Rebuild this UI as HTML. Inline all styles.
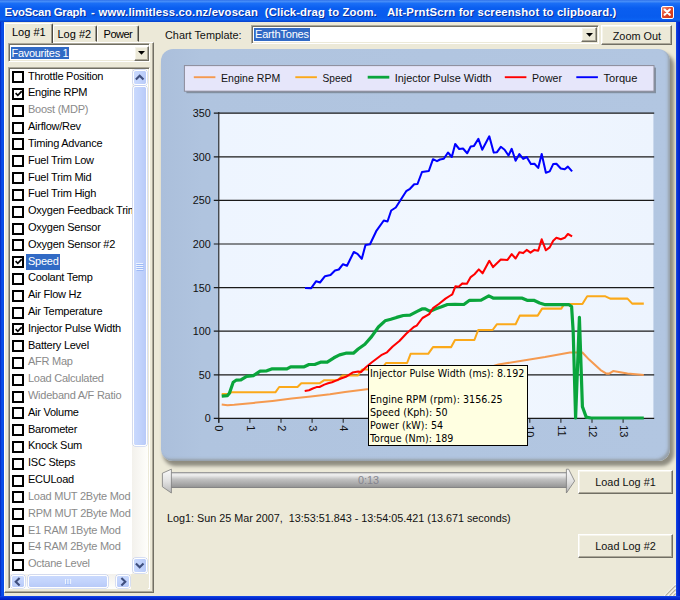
<!DOCTYPE html>
<html><head><meta charset="utf-8"><title>EvoScan Graph</title>
<style>
html,body{margin:0;padding:0;}
body{width:680px;height:600px;overflow:hidden;background:#ECE9D8;position:relative;font-family:"Liberation Sans",sans-serif;font-size:11px;color:#000;}
.a{position:absolute;}
.t{position:absolute;white-space:pre;line-height:13px;}
#title{left:0;top:0;width:680px;height:22px;background:linear-gradient(#2A6CE8 0px,#4A90F8 1.2px,#1A6EF6 3.5px,#0A5EF0 8px,#085CEE 17px,#0B62F2 19.5px,#0A4AD6 21.2px,#0840C8 22px);}
#title .t{top:4.9px;color:#fff;font-weight:bold;font-size:11.3px;line-height:15px;text-shadow:1px 1px 0 #0A2F9C;}
.bl{background:#0542D6;}
.btn{position:absolute;background:#ECE9D8;box-sizing:border-box;border:1px solid;border-color:#fff #716F64 #716F64 #fff;box-shadow:inset -1px -1px 0 #ACA899, inset 1px 1px 0 #F6F4EA;text-align:center;}
.sunk{position:absolute;box-sizing:border-box;border:1px solid;border-color:#ACA899 #fff #fff #ACA899;box-shadow:inset 1px 1px 0 #716F64, inset -1px -1px 0 #ECE9D8;background:#fff;}
.cb{position:absolute;left:12.5px;width:12px;height:12px;box-sizing:border-box;border:2px solid #000;background:#fff;}
.it{position:absolute;left:28px;white-space:pre;line-height:13px;letter-spacing:-0.25px;}
.g{color:#8A8A8A;}
.lb{font-size:11.7px;transform:scaleX(0.93);transform-origin:0 0;color:#111;}
.lb.c{left:0;width:100%;transform-origin:50% 0;}
.sb{position:absolute;box-sizing:border-box;border:1px solid #fff;border-radius:2.5px;background:linear-gradient(90deg,#C9D9FD,#C2D3FC 50%,#B8CAF8);box-shadow:0 0 0 0.5px #B4C4F0;}
</style></head><body>

<div id="title" class="a"><div class="t" style="left:4.6px;letter-spacing:-0.21px">EvoScan Graph </div><div class="t" style="left:90.9px">- </div><div class="t" style="left:98.6px;letter-spacing:0.18px">www.limitless.co.nz/evoscan  </div><div class="t" style="left:264.8px;letter-spacing:0.11px">(Click-drag to Zoom.   </div><div class="t" style="left:386.9px;letter-spacing:0.16px">Alt-PrntScrn for screenshot to clipboard.)</div></div>
<div class="a" style="left:0;top:22px;width:3.9px;height:578px;background:linear-gradient(90deg,#0424B8,#0A50EE 45%,#0848E2)"></div>
<div class="a" style="left:676px;top:22px;width:4px;height:578px;background:linear-gradient(90deg,#1648EA,#0530D6 40%,#001EC2)"></div>
<div class="a" style="left:0;top:595.6px;width:680px;height:4.4px;background:linear-gradient(#1648EA,#0530D6 40%,#001EC2)"></div>
<div class="a" style="left:661.4px;top:6.3px;width:12.4px;height:12.4px;box-sizing:border-box;border:1px solid #fff;border-radius:2px;background:linear-gradient(135deg,#F0967C,#E2482A 45%,#C9341A)"><svg class="a" style="left:0;top:0" width="10.4" height="10.4" viewBox="0 0 10.4 10.4"><path d="M2.6 2.6 L7.8 7.8 M7.8 2.6 L2.6 7.8" stroke="#fff" stroke-width="2.2" stroke-linecap="round"/></svg></div>
<div class="a" style="left:4.2px;top:41.6px;width:149.6px;height:551.6px;box-sizing:border-box;border:1px solid;border-color:#fff #716F64 #716F64 #fff;box-shadow:inset -1px -1px 0 #ACA899"></div>
<div class="a" style="left:53px;top:25px;width:43.5px;height:17px;box-sizing:border-box;border:1px solid;border-color:#fff #4A4840 transparent #fff;border-radius:2px 2px 0 0;box-shadow:inset -1px 0 0 #9D9A8C"></div>
<div class="a" style="left:96.5px;top:25px;width:42px;height:17px;box-sizing:border-box;border:1px solid;border-color:#fff #4A4840 transparent #fff;border-radius:2px 2px 0 0;box-shadow:inset -1px 0 0 #9D9A8C"></div>
<div class="a" style="left:4.2px;top:23px;width:49px;height:19.6px;box-sizing:border-box;border:1px solid;border-color:#fff #4A4840 #ECE9D8 #fff;border-bottom:none;border-radius:2px 2px 0 0;background:#ECE9D8;box-shadow:inset -1px 0 0 #9D9A8C"></div>
<div class="t" style="left:12px;top:25.5px;font-size:11px">Log #1</div>
<div class="t" style="left:57.5px;top:27.5px;font-size:11px">Log #2</div>
<div class="t" style="left:103.6px;top:27.5px;font-size:11px;letter-spacing:-0.5px">Power</div>
<div class="sunk" style="left:8.3px;top:43.4px;width:142px;height:19px"></div>
<div class="a" style="left:11px;top:47px;width:57.5px;height:12.4px;background:#316AC5"></div>
<div class="t" style="left:11.5px;top:46.8px;color:#fff;letter-spacing:-0.3px">Favourites 1</div>
<div class="btn" style="left:134px;top:45.6px;width:14.6px;height:15.2px"><svg class="a" style="left:3.3px;top:4.6px" width="7" height="4" viewBox="0 0 7 4"><path d="M0 0 H7 L3.5 3.8 Z" fill="#000"/></svg></div>
<div class="sunk" style="left:8.3px;top:67.4px;width:142px;height:522px"></div>
<div class="a" style="left:10.3px;top:69.4px;width:122.2px;height:505px;overflow:hidden;background:#fff">
<div class="cb" style="left:2.2px;top:1.85px">
</div>
<div class="it" style="left:17.7px;top:0.25px">Throttle Position</div>
<div class="cb" style="left:2.2px;top:18.66px">
<svg class="a" style="left:0.3px;top:0.3px" width="7.4" height="7.4" viewBox="0 0 7.4 7.4"><path d="M0.6 3.2 L2.8 5.4 L6.8 1.2" stroke="#000" stroke-width="1.7" fill="none"/></svg>
</div>
<div class="it" style="left:17.7px;top:17.06px">Engine RPM</div>
<div class="cb" style="left:2.2px;top:35.47px">
</div>
<div class="it g" style="left:17.7px;top:33.87px">Boost (MDP)</div>
<div class="cb" style="left:2.2px;top:52.28px">
</div>
<div class="it" style="left:17.7px;top:50.68px">Airflow/Rev</div>
<div class="cb" style="left:2.2px;top:69.09px">
</div>
<div class="it" style="left:17.7px;top:67.49px">Timing Advance</div>
<div class="cb" style="left:2.2px;top:85.90px">
</div>
<div class="it" style="left:17.7px;top:84.30px">Fuel Trim Low</div>
<div class="cb" style="left:2.2px;top:102.71px">
</div>
<div class="it" style="left:17.7px;top:101.11px">Fuel Trim Mid</div>
<div class="cb" style="left:2.2px;top:119.52px">
</div>
<div class="it" style="left:17.7px;top:117.92px">Fuel Trim High</div>
<div class="cb" style="left:2.2px;top:136.33px">
</div>
<div class="it" style="left:17.7px;top:134.73px">Oxygen Feedback Trim</div>
<div class="cb" style="left:2.2px;top:153.14px">
</div>
<div class="it" style="left:17.7px;top:151.54px">Oxygen Sensor</div>
<div class="cb" style="left:2.2px;top:169.95px">
</div>
<div class="it" style="left:17.7px;top:168.35px">Oxygen Sensor #2</div>
<div class="a" style="left:16px;top:184.96px;width:33.6px;height:16px;background:#316AC5"></div>
<div class="cb" style="left:2.2px;top:186.76px">
<svg class="a" style="left:0.3px;top:0.3px" width="7.4" height="7.4" viewBox="0 0 7.4 7.4"><path d="M0.6 3.2 L2.8 5.4 L6.8 1.2" stroke="#000" stroke-width="1.7" fill="none"/></svg>
</div>
<div class="it" style="left:17.7px;top:185.16px;color:#fff">Speed</div>
<div class="cb" style="left:2.2px;top:203.57px">
</div>
<div class="it" style="left:17.7px;top:201.97px">Coolant Temp</div>
<div class="cb" style="left:2.2px;top:220.38px">
</div>
<div class="it" style="left:17.7px;top:218.78px">Air Flow Hz</div>
<div class="cb" style="left:2.2px;top:237.19px">
</div>
<div class="it" style="left:17.7px;top:235.59px">Air Temperature</div>
<div class="cb" style="left:2.2px;top:254.00px">
<svg class="a" style="left:0.3px;top:0.3px" width="7.4" height="7.4" viewBox="0 0 7.4 7.4"><path d="M0.6 3.2 L2.8 5.4 L6.8 1.2" stroke="#000" stroke-width="1.7" fill="none"/></svg>
</div>
<div class="it" style="left:17.7px;top:252.40px">Injector Pulse Width</div>
<div class="cb" style="left:2.2px;top:270.81px">
</div>
<div class="it" style="left:17.7px;top:269.21px">Battery Level</div>
<div class="cb" style="left:2.2px;top:287.62px">
</div>
<div class="it g" style="left:17.7px;top:286.02px">AFR Map</div>
<div class="cb" style="left:2.2px;top:304.43px">
</div>
<div class="it g" style="left:17.7px;top:302.83px">Load Calculated</div>
<div class="cb" style="left:2.2px;top:321.24px">
</div>
<div class="it g" style="left:17.7px;top:319.64px">Wideband A/F Ratio</div>
<div class="cb" style="left:2.2px;top:338.05px">
</div>
<div class="it" style="left:17.7px;top:336.45px">Air Volume</div>
<div class="cb" style="left:2.2px;top:354.86px">
</div>
<div class="it" style="left:17.7px;top:353.26px">Barometer</div>
<div class="cb" style="left:2.2px;top:371.67px">
</div>
<div class="it" style="left:17.7px;top:370.07px">Knock Sum</div>
<div class="cb" style="left:2.2px;top:388.48px">
</div>
<div class="it" style="left:17.7px;top:386.88px">ISC Steps</div>
<div class="cb" style="left:2.2px;top:405.29px">
</div>
<div class="it" style="left:17.7px;top:403.69px">ECULoad</div>
<div class="cb" style="left:2.2px;top:422.10px">
</div>
<div class="it g" style="left:17.7px;top:420.50px">Load MUT 2Byte Mod</div>
<div class="cb" style="left:2.2px;top:438.91px">
</div>
<div class="it g" style="left:17.7px;top:437.31px">RPM MUT 2Byte Mod</div>
<div class="cb" style="left:2.2px;top:455.72px">
</div>
<div class="it g" style="left:17.7px;top:454.12px">E1 RAM 1Byte Mod</div>
<div class="cb" style="left:2.2px;top:472.53px">
</div>
<div class="it g" style="left:17.7px;top:470.93px">E4 RAM 2Byte Mod</div>
<div class="cb" style="left:2.2px;top:489.34px">
</div>
<div class="it g" style="left:17.7px;top:487.74px">Octane Level</div>
</div>
<div class="a" style="left:131.5px;top:69.4px;width:16.5px;height:505px;background:linear-gradient(90deg,#F3F1EC,#FEFEFB)"></div>
<div class="sb" style="left:132.6px;top:70.2px;width:14.2px;height:14.6px"><svg class="a" style="left:1.7px;top:3px" width="9.4" height="7" viewBox="0 0 9.4 7"><path d="M0.9 5.6 L4.7 1.7 L8.5 5.6" stroke="#3F4F7E" stroke-width="2.1" fill="none"/></svg></div>
<div class="sb" style="left:132.6px;top:557.8px;width:14.2px;height:14.8px"><svg class="a" style="left:1.7px;top:3.6px" width="9.4" height="7" viewBox="0 0 9.4 7"><path d="M0.9 1.4 L4.7 5.3 L8.5 1.4" stroke="#3F4F7E" stroke-width="2.1" fill="none"/></svg></div>
<div class="sb" style="left:132.6px;top:86.4px;width:14.2px;height:359.4px"><div class="a" style="left:2.8px;top:175.4px;width:6.6px;height:1px;background:#EEF4FE;box-shadow:0 2px 0 #EEF4FE,0 4px 0 #EEF4FE,0 6px 0 #EEF4FE,0.6px 1px 0 #9DB9F6,0.6px 3px 0 #9DB9F6,0.6px 5px 0 #9DB9F6,0.6px 7px 0 #9DB9F6"></div></div>
<div class="a" style="left:10.3px;top:574.2px;width:137.7px;height:14.6px;background:linear-gradient(#F3F1EC,#FEFEFB)"></div>
<div class="a" style="left:131px;top:574.2px;width:17px;height:14.6px;background:#ECE9D8"></div>
<div class="sb" style="left:10.8px;top:574.8px;width:14.6px;height:13.6px;background:linear-gradient(#C9D9FD,#C2D3FC 50%,#B8CAF8)"><svg class="a" style="left:2.6px;top:1.2px" width="7" height="9.4" viewBox="0 0 7 9.4"><path d="M5.6 0.9 L1.7 4.7 L5.6 8.5" stroke="#3F4F7E" stroke-width="2.1" fill="none"/></svg></div>
<div class="sb" style="left:115.6px;top:574.8px;width:14.6px;height:13.6px;background:linear-gradient(#C9D9FD,#C2D3FC 50%,#B8CAF8)"><svg class="a" style="left:3.6px;top:1.2px" width="7" height="9.4" viewBox="0 0 7 9.4"><path d="M1.4 0.9 L5.3 4.7 L1.4 8.5" stroke="#3F4F7E" stroke-width="2.1" fill="none"/></svg></div>
<div class="sb" style="left:28px;top:574.8px;width:80px;height:13.6px;background:linear-gradient(#C9D9FD,#C2D3FC 50%,#B8CAF8)"><div class="a" style="left:35.5px;top:3px;width:0.9px;height:5.5px;background:#EEF4FE;box-shadow:1.7px 0 0 #EEF4FE,3.4px 0 0 #EEF4FE,5.1px 0 0 #EEF4FE,0.8px 0.6px 0 #8CB0F8,2.5px 0.6px 0 #8CB0F8,4.2px 0.6px 0 #8CB0F8"></div></div>
<div class="t lb" style="left:164.8px;top:28.3px">Chart Template:</div>
<div class="sunk" style="left:250.6px;top:24.8px;width:348px;height:19.4px"></div>
<div class="a" style="left:254.4px;top:27.6px;width:55.2px;height:13.4px;background:#316AC5"></div>
<div class="t" style="left:255px;top:27.8px;color:#fff;letter-spacing:-0.18px">EarthTones</div>
<div class="btn" style="left:581px;top:26.6px;width:16px;height:15.8px"><svg class="a" style="left:3.7px;top:5.4px" width="7" height="4" viewBox="0 0 7 4"><path d="M0 0 H7 L3.5 3.8 Z" fill="#000"/></svg></div>
<div class="btn" style="left:600.6px;top:25px;width:71.8px;height:19.8px"><div class="t lb c" style="top:2.6px">Zoom Out</div></div>
<div class="a" style="left:160.6px;top:49.4px;width:509.8px;height:411.4px;border-radius:12px;background:linear-gradient(90deg,#ABBFDB,#B0C4DF 8%,#B2C6E1);box-shadow:3.2px 4.4px 3.8px 0.4px #8E8C80, inset -2.5px -2.5px 2.5px -0.5px rgba(125,125,118,0.5)"></div>
<svg class="a" style="left:0;top:0" width="680" height="600" viewBox="0 0 680 600" font-family="Liberation Sans, sans-serif" font-size="11">
<defs><linearGradient id="pg" x1="0" y1="0" x2="1" y2="0"><stop offset="0" stop-color="#EEF5FF"/><stop offset="0.5" stop-color="#F1F7FF"/><stop offset="1" stop-color="#EDF4FE"/></linearGradient></defs>
<rect x="186.4" y="67.6" width="469.6" height="25.6" fill="#7A8694" opacity="0.85"/>
<rect x="184.4" y="65.6" width="469.6" height="25.6" fill="#E6E6FA" stroke="#8B8B99" stroke-width="1"/>
<rect x="218.8" y="113.2" width="434.6" height="305.2" fill="url(#pg)"/>
<line x1="213.8" y1="418.40" x2="654.2" y2="418.40" stroke="#1A1A1A" stroke-width="1.2"/>
<text x="210.8" y="422.30" font-size="10.8" text-anchor="end" fill="#111">0</text>
<line x1="213.8" y1="374.80" x2="654.2" y2="374.80" stroke="#1A1A1A" stroke-width="1.2"/>
<text x="210.8" y="378.70" font-size="10.8" text-anchor="end" fill="#111">50</text>
<line x1="213.8" y1="331.20" x2="654.2" y2="331.20" stroke="#1A1A1A" stroke-width="1.2"/>
<text x="210.8" y="335.10" font-size="10.8" text-anchor="end" fill="#111">100</text>
<line x1="213.8" y1="287.60" x2="654.2" y2="287.60" stroke="#1A1A1A" stroke-width="1.2"/>
<text x="210.8" y="291.50" font-size="10.8" text-anchor="end" fill="#111">150</text>
<line x1="213.8" y1="244.00" x2="654.2" y2="244.00" stroke="#1A1A1A" stroke-width="1.2"/>
<text x="210.8" y="247.90" font-size="10.8" text-anchor="end" fill="#111">200</text>
<line x1="213.8" y1="200.40" x2="654.2" y2="200.40" stroke="#1A1A1A" stroke-width="1.2"/>
<text x="210.8" y="204.30" font-size="10.8" text-anchor="end" fill="#111">250</text>
<line x1="213.8" y1="156.80" x2="654.2" y2="156.80" stroke="#1A1A1A" stroke-width="1.2"/>
<text x="210.8" y="160.70" font-size="10.8" text-anchor="end" fill="#111">300</text>
<line x1="213.8" y1="113.20" x2="654.2" y2="113.20" stroke="#1A1A1A" stroke-width="1.2"/>
<text x="210.8" y="117.10" font-size="10.8" text-anchor="end" fill="#111">350</text>
<line x1="218.8" y1="112" x2="218.8" y2="422.8" stroke="#1E1E1E" stroke-width="1.1"/>
<line x1="218.80" y1="418.4" x2="218.80" y2="422.8" stroke="#1E1E1E" stroke-width="1"/>
<text transform="translate(215.40,425.2) rotate(90)" fill="#111">0</text>
<line x1="249.90" y1="418.4" x2="249.90" y2="422.8" stroke="#1E1E1E" stroke-width="1"/>
<text transform="translate(246.50,425.2) rotate(90)" fill="#111">1</text>
<line x1="281.00" y1="418.4" x2="281.00" y2="422.8" stroke="#1E1E1E" stroke-width="1"/>
<text transform="translate(277.60,425.2) rotate(90)" fill="#111">2</text>
<line x1="312.10" y1="418.4" x2="312.10" y2="422.8" stroke="#1E1E1E" stroke-width="1"/>
<text transform="translate(308.70,425.2) rotate(90)" fill="#111">3</text>
<line x1="343.20" y1="418.4" x2="343.20" y2="422.8" stroke="#1E1E1E" stroke-width="1"/>
<text transform="translate(339.80,425.2) rotate(90)" fill="#111">4</text>
<line x1="374.30" y1="418.4" x2="374.30" y2="422.8" stroke="#1E1E1E" stroke-width="1"/>
<text transform="translate(370.90,425.2) rotate(90)" fill="#111">5</text>
<line x1="405.40" y1="418.4" x2="405.40" y2="422.8" stroke="#1E1E1E" stroke-width="1"/>
<text transform="translate(402.00,425.2) rotate(90)" fill="#111">6</text>
<line x1="436.50" y1="418.4" x2="436.50" y2="422.8" stroke="#1E1E1E" stroke-width="1"/>
<text transform="translate(433.10,425.2) rotate(90)" fill="#111">7</text>
<line x1="467.60" y1="418.4" x2="467.60" y2="422.8" stroke="#1E1E1E" stroke-width="1"/>
<text transform="translate(464.20,425.2) rotate(90)" fill="#111">8</text>
<line x1="498.70" y1="418.4" x2="498.70" y2="422.8" stroke="#1E1E1E" stroke-width="1"/>
<text transform="translate(495.30,425.2) rotate(90)" fill="#111">9</text>
<line x1="529.80" y1="418.4" x2="529.80" y2="422.8" stroke="#1E1E1E" stroke-width="1"/>
<text transform="translate(526.40,425.2) rotate(90)" fill="#111">10</text>
<line x1="560.90" y1="418.4" x2="560.90" y2="422.8" stroke="#1E1E1E" stroke-width="1"/>
<text transform="translate(557.50,425.2) rotate(90)" fill="#111">11</text>
<line x1="592.00" y1="418.4" x2="592.00" y2="422.8" stroke="#1E1E1E" stroke-width="1"/>
<text transform="translate(588.60,425.2) rotate(90)" fill="#111">12</text>
<line x1="623.10" y1="418.4" x2="623.10" y2="422.8" stroke="#1E1E1E" stroke-width="1"/>
<text transform="translate(619.70,425.2) rotate(90)" fill="#111">13</text>
<polyline points="221.7,404.4 227.5,405.2 234.2,404.8 253.4,402.9 272.5,400.9 291.7,398.6 310.9,396.5 330.0,394.2 345.0,391.9 368.8,388.9 430.0,378.6 470.0,371.2 492.0,366.5 498.4,364.5 545.0,357.1 569.9,352.5 582.4,352.5 589.1,359.6 600.6,370.1 606.4,373.6 609.2,373.6 613.1,371.1 627.5,373.6 643.8,374.9" fill="none" stroke="#F59A50" stroke-width="2.05" stroke-linejoin="round"/>
<polyline points="221.7,393.9 228.4,393.9 231.3,392.3 275.4,392.3 279.2,387.0 297.5,387.0 301.3,383.3 319.5,383.3 324.3,380.2 337.7,380.2 342.5,375.4 358.0,375.4 362.0,369.5 381.0,369.5 386.0,363.0 407.1,363.0 410.6,353.8 428.2,353.8 433.0,347.1 451.2,347.1 455.0,340.0 474.4,340.0 478.2,330.0 492.6,330.0 496.8,324.3 515.6,324.3 519.8,315.6 537.7,315.6 542.1,308.6 561.3,308.6 564.2,304.0 582.4,304.0 587.2,296.3 605.4,296.3 610.2,298.6 627.5,298.6 632.2,303.6 643.8,303.6" fill="none" stroke="#FBA91A" stroke-width="2.05" stroke-linejoin="round"/>
<polyline points="221.7,396.2 227.5,395.6 229.4,393.3 233.2,382.2 236.1,380.2 240.9,379.9 246.6,376.4 253.4,375.6 260.1,371.2 266.8,370.8 271.6,368.9 286.9,368.9 290.7,366.8 304.2,366.8 309.0,364.5 314.7,364.5 320.5,362.2 327.2,362.2 333.9,357.8 339.6,354.9 345.8,353.2 353.4,353.2 358.2,349.0 364.9,344.2 371.6,336.6 378.4,327.0 385.1,320.8 390.8,319.3 396.6,317.4 403.3,315.5 410.0,315.1 416.7,311.6 422.5,308.8 425.3,308.8 430.1,311.3 435.9,308.8 441.6,306.8 447.4,304.5 455.0,304.4 463.8,304.5 469.6,300.3 481.1,300.1 488.8,295.9 493.6,298.2 522.3,298.2 527.1,300.3 533.8,300.3 539.6,303.0 545.3,304.7 569.0,304.7 571.6,306.5 573.2,331.8 575.6,418.0 579.4,317.4 582.4,406.6 586.2,417.1 591.0,418.0 643.8,418.0" fill="none" stroke="#0AA53C" stroke-width="3.2" stroke-linejoin="round"/>
<polyline points="304.7,391.0 309.0,390.2 312.8,388.5 316.6,387.1 319.5,387.0 324.3,384.6 328.1,383.3 332.0,382.3 337.7,379.9 341.6,378.3 345.8,376.8 352.5,372.6 358.2,371.5 361.1,372.0 365.9,367.2 371.6,362.5 381.2,355.2 387.0,352.3 392.7,346.5 399.4,341.0 406.2,333.7 413.8,327.0 416.7,325.6 422.5,318.0 429.2,314.1 433.0,308.2 438.8,304.0 445.5,298.6 451.2,295.0 452.3,294.4 455.4,286.3 458.6,286.7 462.5,283.4 466.9,283.8 470.7,277.1 474.5,274.2 478.8,269.4 482.6,273.3 489.3,260.8 493.1,267.1 500.8,259.5 507.5,259.9 511.7,254.1 515.6,258.5 519.4,252.2 523.2,253.1 526.7,249.9 530.5,252.6 534.4,249.9 538.2,250.7 541.7,239.3 545.9,250.3 549.7,247.4 553.2,240.7 556.4,237.8 560.8,239.3 564.7,237.8 567.9,234.0 572.1,236.3" fill="none" stroke="#FF0000" stroke-width="2.05" stroke-linejoin="round"/>
<polyline points="305.0,288.0 311.2,288.2 316.2,281.2 320.0,282.5 325.0,276.2 330.5,275.0 335.0,270.5 338.8,269.5 343.0,264.2 347.0,265.8 353.8,252.0 357.5,253.8 361.8,258.8 365.5,245.0 370.0,244.2 376.2,231.2 383.8,220.5 387.5,221.5 391.2,210.5 395.8,207.5 406.2,191.2 410.0,188.8 414.2,184.2 417.5,184.0 422.0,172.0 428.8,171.0 433.0,159.2 437.0,161.2 440.0,159.5 443.8,158.8 448.0,152.5 451.8,157.0 455.2,144.0 459.2,149.0 463.0,148.5 467.2,153.2 470.7,146.5 474.0,145.9 478.4,138.8 482.2,149.7 489.3,136.3 493.7,152.6 497.0,152.2 500.8,146.8 504.6,149.7 508.5,155.5 511.7,148.8 515.6,160.8 519.4,154.1 523.2,158.9 526.7,157.0 530.9,164.1 534.4,163.7 538.2,167.9 541.7,154.1 545.9,172.7 549.7,171.4 553.2,164.1 556.4,163.7 560.8,168.5 564.7,169.3 567.9,166.6 572.1,171.4" fill="none" stroke="#0000FF" stroke-width="2.05" stroke-linejoin="round"/>
<line x1="193.8" y1="77.2" x2="215.4" y2="77.2" stroke="#F59A50" stroke-width="1.9"/>
<text x="221" y="81.9" font-size="11.6" fill="#111" textLength="59.2" lengthAdjust="spacingAndGlyphs">Engine RPM</text>
<line x1="295.3" y1="77.2" x2="316.90000000000003" y2="77.2" stroke="#FBA91A" stroke-width="1.9"/>
<text x="322.6" y="81.9" font-size="11.6" fill="#111" textLength="29.4" lengthAdjust="spacingAndGlyphs">Speed</text>
<line x1="367.7" y1="77.2" x2="389.3" y2="77.2" stroke="#0AA53C" stroke-width="2.8"/>
<text x="394.8" y="81.9" font-size="11.6" fill="#111" textLength="96.8" lengthAdjust="spacingAndGlyphs">Injector Pulse Width</text>
<line x1="504.8" y1="77.2" x2="526.4" y2="77.2" stroke="#FF0000" stroke-width="1.9"/>
<text x="532" y="81.9" font-size="11.6" fill="#111" textLength="30" lengthAdjust="spacingAndGlyphs">Power</text>
<line x1="576.3" y1="77.2" x2="597.9" y2="77.2" stroke="#0000FF" stroke-width="1.9"/>
<text x="603.5" y="81.9" font-size="11.6" fill="#111" textLength="33.9" lengthAdjust="spacingAndGlyphs">Torque</text>
</svg>
<div class="a" style="left:367.6px;top:364.8px;width:160.2px;height:81.2px;box-sizing:border-box;border:1px solid #000;background:#FFFFE1;font-family:'DejaVu Sans Condensed','Liberation Sans',sans-serif;font-size:10.6px;letter-spacing:0.04px"><div class="t" style="left:1.4px;top:1.4px">Injector Pulse Width (ms): 8.192</div><div class="t" style="left:1.4px;top:27.3px">Engine RPM (rpm): 3156.25</div><div class="t" style="left:1.4px;top:40.2px">Speed (Kph): 50</div><div class="t" style="left:1.4px;top:53.2px">Power (kW): 54</div><div class="t" style="left:1.4px;top:66.1px">Torque (Nm): 189</div></div>
<div class="a" style="left:171px;top:472.4px;width:396px;height:15.2px;background:linear-gradient(#7A7A7A 0%,#C8C8C8 7%,#F2F2F2 17%,#E2E2E2 27%,#C2C2C2 45%,#ACACAC 70%,#9A9A9A 90%,#8A8A8A 96%,#727272 100%)"></div>
<svg class="a" style="left:0;top:0" width="680" height="600" viewBox="0 0 680 600"><defs><linearGradient id="cg" x1="0" y1="0" x2="0" y2="1"><stop offset="0" stop-color="#FAFAFA"/><stop offset="0.5" stop-color="#E2E2E2"/><stop offset="1" stop-color="#B8B8B8"/></linearGradient></defs><path d="M162.4 473.2 L171.4 469.2 L171.4 493 L162.4 486.8 Z" fill="url(#cg)" stroke="#7C7C7C" stroke-width="0.8"/><path d="M566.4 469.2 L568.6 469.2 L574.6 481 L566.4 493 Z" fill="url(#cg)" stroke="#7C7C7C" stroke-width="0.8"/><text x="368.6" y="484" font-family="Liberation Sans, sans-serif" font-size="10.8" fill="#85858F" text-anchor="middle">0:13</text></svg>
<div class="btn" style="left:577.6px;top:470px;width:95px;height:24.2px"><div class="t lb c" style="top:4px">Load Log #1</div></div>
<div class="btn" style="left:577.6px;top:534.4px;width:95px;height:23.4px"><div class="t lb c" style="top:3.8px">Load Log #2</div></div>
<div class="t lb" style="left:167.4px;top:511.2px;transform:scaleX(0.923)">Log1: Sun 25 Mar 2007,  13:53:51.843 - 13:54:05.421 (13.671 seconds)</div>
<svg class="a" style="left:663px;top:583px" width="13" height="13" viewBox="0 0 13 13"><path d="M12.6 1.4 L1.4 12.6 M12.6 5.4 L5.4 12.6 M12.6 9.4 L9.4 12.6" stroke="#fff" stroke-width="1.1"/><path d="M12.6 2.5 L2.5 12.6 M12.6 6.5 L6.5 12.6 M12.6 10.5 L10.5 12.6" stroke="#B4B09E" stroke-width="1.2"/></svg>
</body></html>
